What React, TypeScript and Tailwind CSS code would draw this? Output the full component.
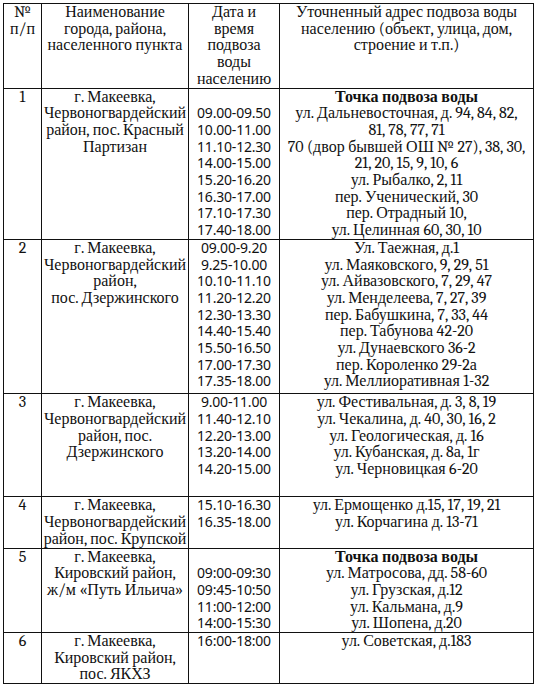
const Lines = ({ items, bold }: { items: string[]; bold?: number }) => (
  <>
    {items.map((t, i) => (
      <div key={i} className={`whitespace-nowrap ${bold === i ? "font-bold" : ""}`}>
        {t === "" ? "\u00a0" : t}
      </div>
    ))}
  </>
);

const rows = [
  {
    n: "1",
    place: ["г. Макеевка,", "Червоногвардейский", "район, пос. Красный", "Партизан"],
    times: ["", "09.00-09.50", "10.00-11.00", "11.10-12.30", "14.00-15.00", "15.20-16.20", "16.30-17.00", "17.10-17.30", "17.40-18.00"],
    addr: [
      "Точка подвоза воды",
      "ул. Дальневосточная, д. 94, 84, 82,",
      "81, 78, 77, 71",
      "70 (двор бывшей ОШ № 27), 38, 30,",
      "21, 20, 15, 9, 10, 6",
      "ул. Рыбалко, 2, 11",
      "пер. Ученический, 30",
      "пер. Отрадный 10,",
      "ул. Целинная 60, 30, 10",
    ],
    bold: 0,
    pad: "",
  },
  {
    n: "2",
    place: ["г. Макеевка,", "Червоногвардейский", "район,", "пос. Дзержинского"],
    times: ["09.00-9.20", "9.25-10.00", "10.10-11.10", "11.20-12.20", "12.30-13.30", "14.40-15.40", "15.50-16.50", "17.00-17.30", "17.35-18.00"],
    addr: [
      "Ул. Таежная, д.1",
      "ул. Маяковского, 9, 29, 51",
      "ул. Айвазовского, 7, 29, 47",
      "ул. Менделеева, 7, 27, 39",
      "пер. Бабушкина, 7, 33, 44",
      "пер. Табунова 42-20",
      "ул. Дунаевского 36-2",
      "пер. Короленко 29-2а",
      "ул. Меллиоративная 1-32",
    ],
    pad: "pb-[3px]",
  },
  {
    n: "3",
    place: ["г. Макеевка,", "Червоногвардейский", "район, пос.", "Дзержинского", ""],
    times: ["9.00-11.00", "11.40-12.10", "12.20-13.00", "13.20-14.00", "14.20-15.00"],
    addr: [
      "ул. Фестивальная, д. 3, 8, 19",
      "ул. Чекалина, д. 40, 30, 16, 2",
      "ул. Геологическая, д. 16",
      "ул. Кубанская, д. 8а, 1г",
      "ул. Черновицкая 6-20",
      "",
    ],
    pad: "pb-[2px]",
  },
  {
    n: "4",
    place: ["г. Макеевка,", "Червоногвардейский", "район, пос. Крупской"],
    times: ["15.10-16.30", "16.35-18.00"],
    addr: ["ул. Ермощенко д.15, 17, 19, 21", "ул. Корчагина д. 13-71"],
    pad: "",
  },
  {
    n: "5",
    place: ["г. Макеевка,", "Кировский район,", "ж/м «Путь Ильича»"],
    times: ["", "09:00-09:30", "09:45-10:50", "11:00-12:00", "14:00-15:30"],
    addr: ["Точка подвоза воды", "ул. Матросова, дд. 58-60", "ул. Грузская, д.12", "ул. Кальмана, д.9", "ул. Шопена, д.20"],
    bold: 0,
    pad: "",
  },
  {
    n: "6",
    place: ["г. Макеевка,", "Кировский район,", "пос. ЯКХЗ"],
    times: ["16:00-18:00"],
    addr: ["ул. Советская, д.183"],
    pad: "",
  },
];

const cell = "border border-[#111] align-top text-center p-0";
const timeFont = "font-sans text-[14px] tracking-[-0.2px]";

export default function App() {
  return (
    <div className="min-h-[686px] w-[536px] bg-white pt-[3px] pl-[3px] font-serif text-[16px] leading-[16.7px] text-[#111]">
      <table className="table-fixed border-collapse w-[530px]">
        <colgroup>
          <col className="w-[38px]" />
          <col className="w-[147px]" />
          <col className="w-[91px]" />
          <col className="w-[254px]" />
        </colgroup>
        <thead>
          <tr>
            <th className={`${cell} font-normal`}>
              <Lines items={["№", "п/п"]} />
            </th>
            <th className={`${cell} font-normal`}>
              <Lines items={["Наименование", "города, района,", "населенного пункта"]} />
            </th>
            <th className={`${cell} font-normal`}>
              <Lines items={["Дата и", "время", "подвоза", "воды", "населению"]} />
            </th>
            <th className={`${cell} font-normal`}>
              <Lines items={["Уточненный адрес подвоза воды", "населению (объект, улица, дом,", "строение и т.п.)"]} />
            </th>
          </tr>
        </thead>
        <tbody>
          {rows.map((r) => (
            <tr key={r.n}>
              <td className={`${cell} ${r.pad}`}>{r.n}</td>
              <td className={`${cell} ${r.pad}`}>
                <Lines items={r.place} />
              </td>
              <td className={`${cell} ${r.pad} ${timeFont}`}>
                <Lines items={r.times} />
              </td>
              <td className={`${cell} ${r.pad}`}>
                <Lines items={r.addr} bold={r.bold} />
              </td>
            </tr>
          ))}
        </tbody>
      </table>
    </div>
  );
}
